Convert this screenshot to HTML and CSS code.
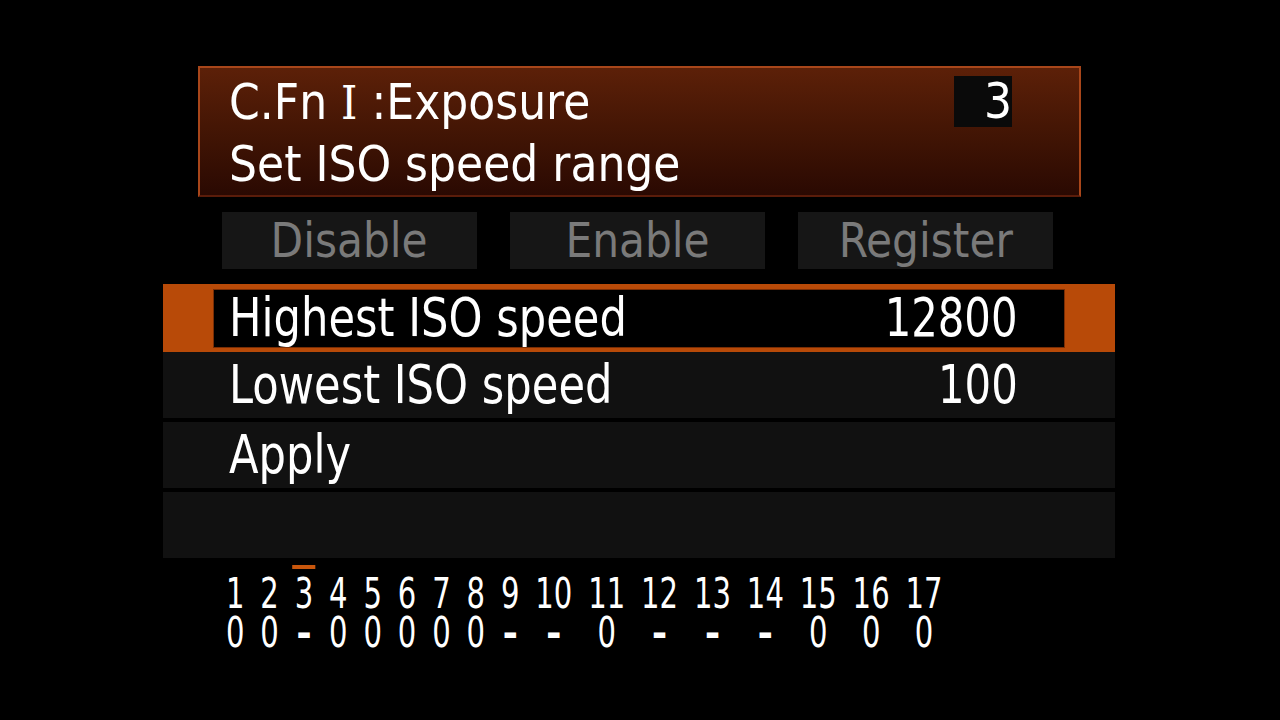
FILE: index.html
```html
<!DOCTYPE html>
<html lang="en">
  <head>
    <meta charset="UTF-8" />
    <meta name="viewport" content="width=device-width, initial-scale=1.0" />
    <title>C.Fn I Exposure</title>
    <link rel="stylesheet" href="styles.css">
  </head>
  <body>
    <main class="screen">
      <section class="cfn-head">
        <div class="cfn-line">
          <span class="txt">C.Fn <span class="roman">Ⅰ</span> :Exposure</span>
          <span class="cfn-no">3</span>
        </div>
        <div class="cfn-line"><span class="txt">Set ISO speed range</span></div>
      </section>

      <div class="choices">
        <div class="choice"><span>Disable</span></div>
        <div class="choice"><span>Enable</span></div>
        <div class="choice"><span>Register</span></div>
      </div>

      <ul class="menu">
        <li class="item item-on">
          <div class="item-in"><span class="label">Highest ISO speed</span><span class="val">12800</span></div>
        </li>
        <li class="item">
          <div class="item-in"><span class="label">Lowest ISO speed</span><span class="val">100</span></div>
        </li>
        <li class="item">
          <div class="item-in"><span class="label">Apply</span></div>
        </li>
        <li class="item"></li>
      </ul>

      <div class="fn-table">
        <div class="fn"><b>1</b><i>0</i></div>
        <div class="fn"><b>2</b><i>0</i></div>
        <div class="fn fn-cur"><b>3</b><i class="off">–</i></div>
        <div class="fn"><b>4</b><i>0</i></div>
        <div class="fn"><b>5</b><i>0</i></div>
        <div class="fn"><b>6</b><i>0</i></div>
        <div class="fn"><b>7</b><i>0</i></div>
        <div class="fn"><b>8</b><i>0</i></div>
        <div class="fn"><b>9</b><i class="off">–</i></div>
        <div class="fn"><b>10</b><i class="off">–</i></div>
        <div class="fn"><b>11</b><i>0</i></div>
        <div class="fn"><b>12</b><i class="off">–</i></div>
        <div class="fn"><b>13</b><i class="off">–</i></div>
        <div class="fn"><b>14</b><i class="off">–</i></div>
        <div class="fn"><b>15</b><i>0</i></div>
        <div class="fn"><b>16</b><i>0</i></div>
        <div class="fn"><b>17</b><i>0</i></div>
      </div>
    </main>
  </body>
</html>
```

FILE: styles.css
```css
body {
  margin: 0;
  background: #000;
  color: #fff;
  font-family: "DejaVu Sans Condensed", "DejaVu Sans", sans-serif;
  font-stretch: condensed;
}
.screen {
  width: 1280px;
  height: 720px;
  padding-top: 66px;
  box-sizing: border-box;
}

/* header box */
.cfn-head {
  margin-left: 198px;
  width: 883px;
  height: 131px;
  box-sizing: border-box;
  border: 2px solid #a8461a;
  border-bottom-color: #5a1c0a;
  background: linear-gradient(#5c2008, #3e1304 60%, #2a0902);
  padding: 3px 67px 0 29px;
  font-size: 49px;
}
.cfn-line {
  display: flex;
  justify-content: space-between;
  align-items: center;
  height: 62px;
}
.txt {
  white-space: nowrap;
}
.roman {
  font-family: "DejaVu Serif", serif;
  font-size: 46px;
}
.cfn-no {
  background: #0a0a0a;
  width: 58px;
  height: 51px;
  line-height: 51px;
  text-align: right;
  box-sizing: border-box;
  padding-right: 0;
  margin-top: -2px;
}

/* Disable / Enable / Register */
.choices {
  display: flex;
  gap: 33px;
  margin: 15px 0 0 222px;
}
.choice {
  width: 255px;
  height: 57px;
  line-height: 57px;
  background: #161616;
  color: #7a7a7a;
  text-align: center;
  font-size: 48px;
}
.choice span {
  display: inline-block;
  transform: scaleX(0.98);
}

/* menu rows */
.menu {
  list-style: none;
  margin: 15px 0 0 163px;
  padding: 0;
  width: 952px;
}
.item {
  height: 66px;
  margin-bottom: 4px;
  background: #111;
  box-sizing: border-box;
  padding: 0 50px;
  display: flex;
}
.item-in {
  flex: 1;
  display: flex;
  justify-content: space-between;
  align-items: center;
  padding: 0 47px 2px 16px;
  font-size: 54px;
}
.label,
.val {
  display: inline-block;
  white-space: nowrap;
}
.label {
  transform: scaleX(0.89);
  transform-origin: left;
}
.val {
  transform: scaleX(0.86);
  transform-origin: right;
}
.item-on {
  height: 68px;
  margin-bottom: 0;
  background: #b84a08;
  padding-top: 5px;
  padding-bottom: 4px;
}
.item-on .item-in {
  background: #000;
  border: 1px solid #7a2e05;
  padding-left: 15px;
  padding-right: 46px;
}

/* custom function overview */
.fn-table {
  display: flex;
  gap: 20.6px;
  margin: 7px 0 0 226px;
  font-size: 42px;
  line-height: 38px;
  transform: scaleX(0.77);
  transform-origin: left;
}
.fn {
  position: relative;
  display: flex;
  flex-direction: column;
  align-items: center;
  padding-top: 10px;
}
.fn b,
.fn i {
  font-weight: normal;
  font-style: normal;
  height: 38px;
}
.fn i {
  margin-top: 1px;
}
.fn i.off {
  font-weight: bold;
}
.fn-cur::before {
  content: "";
  position: absolute;
  top: 0;
  left: -3px;
  right: -3px;
  height: 4px;
  background: #c8560c;
}
```
